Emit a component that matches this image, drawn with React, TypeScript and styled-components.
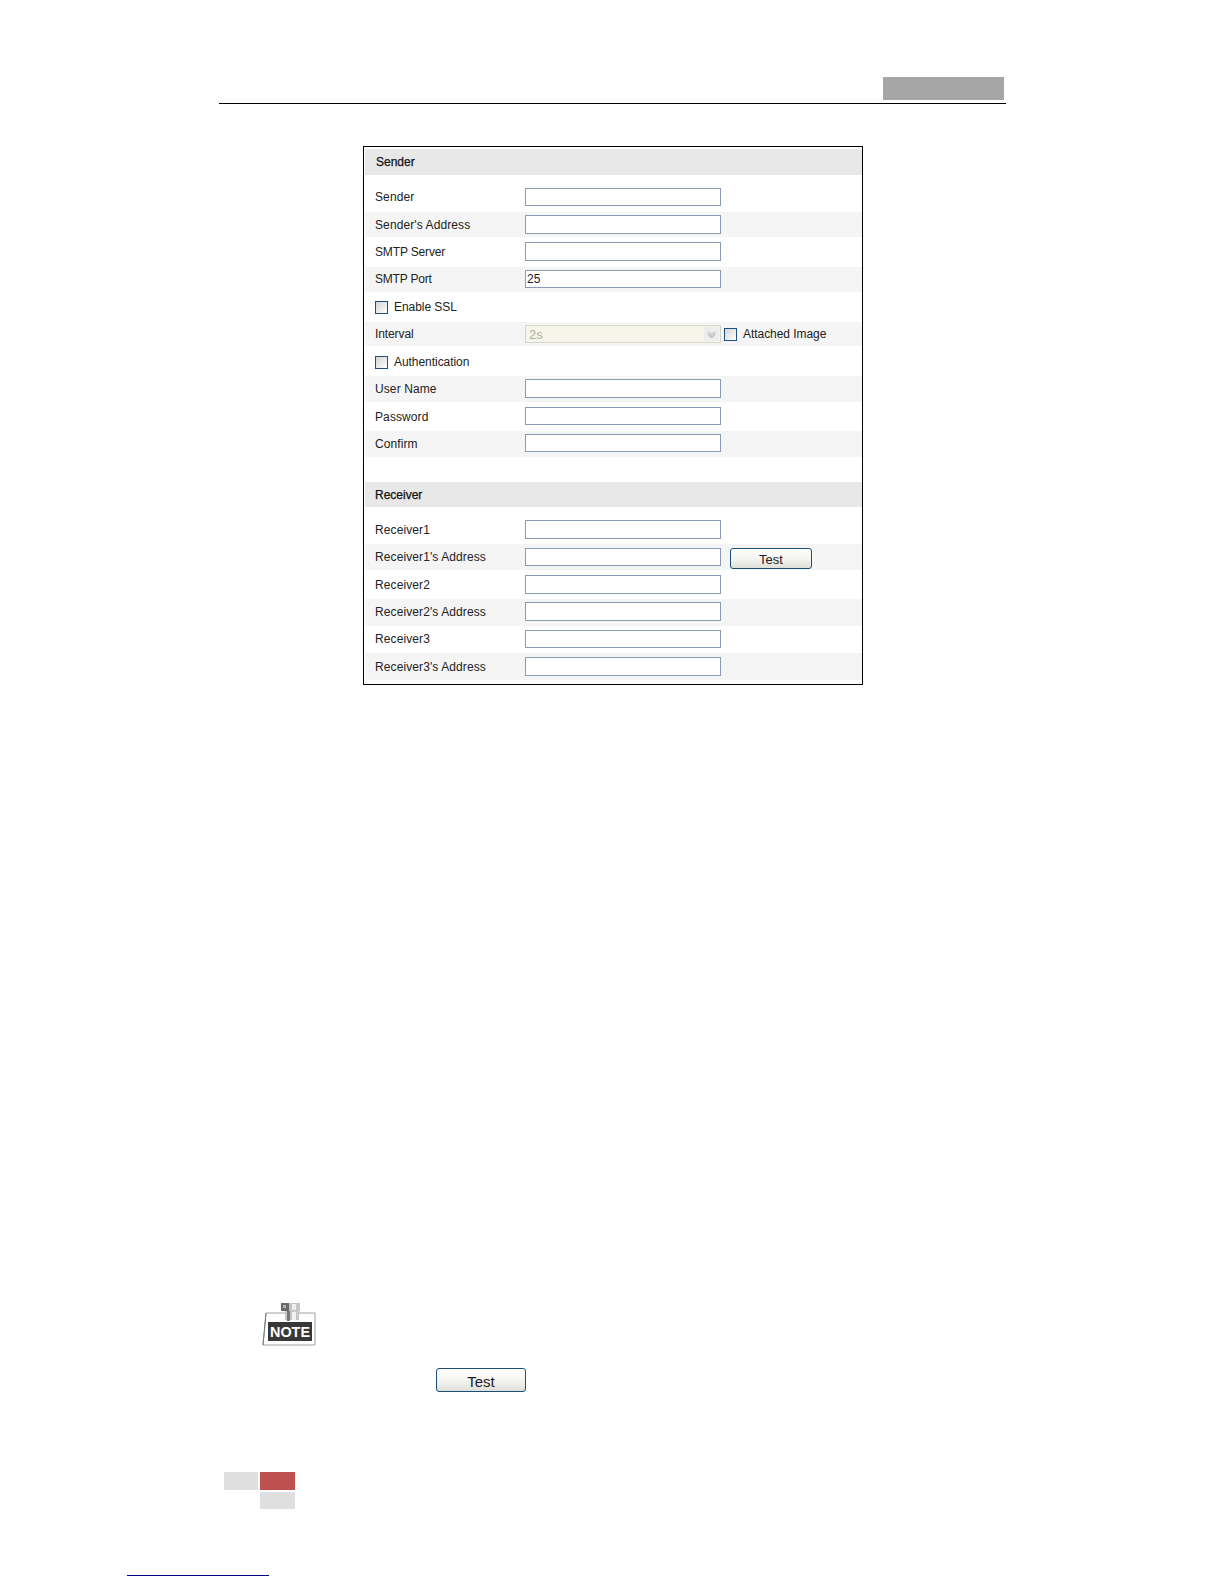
import React from "react";
import styled, { createGlobalStyle } from "styled-components";

const Global = createGlobalStyle`
  html, body { margin: 0; padding: 0; background: #fff; }
  * { box-sizing: border-box; }
`;

const Page = styled.div`
  width: 1224px;
  height: 1584px;
  overflow: hidden;
  display: flex;
  flex-direction: column;
  font-family: "Liberation Sans", Arial, sans-serif;
  font-size: 12px;
  color: #222;
`;

const TopBar = styled.header`
  margin-left: 219px;
  width: 787px;
  height: 104px;
  padding: 77px 2px 3px 0;
  display: flex;
  justify-content: flex-end;
  border-bottom: 1px solid #000;
`;

const TitleBlock = styled.div`
  width: 121px;
  background: #a6a6a6;
`;

const Panel = styled.section`
  margin: 42px 0 0 363px;
  width: 500px;
  height: 539px;
  padding: 2px 0 0 1px;
  border: 1px solid #000;
  background: #fff;
`;

const Band = styled.h2<{ $inset?: number; $height?: number }>`
  margin: 0;
  height: ${(p) => p.$height ?? 26}px;
  padding-left: ${(p) => p.$inset ?? 11}px;
  display: flex;
  align-items: center;
  background: #e8e8e8;
  font-size: 12px;
  font-weight: 400;
  color: #111;
  -webkit-text-stroke: 0.25px #111;
`;

const Row = styled.div<{ $striped?: boolean; $height: number; $nudge?: number }>`
  height: ${(p) => p.$height}px;
  padding: ${(p) => p.$nudge ?? 0}px 0 0 10px;
  display: grid;
  grid-template-columns: 150px 196px auto;
  align-items: center;
  background: ${(p) => (p.$striped ? "#f5f5f5" : "#fff")};
`;

const Spacer = styled.div<{ $height: number }>`
  height: ${(p) => p.$height}px;
`;

const Label = styled.label<{ $shift?: number; $track?: number }>`
  white-space: nowrap;
  letter-spacing: ${(p) => p.$track ?? 0.1}px;
  transform: translateY(${(p) => p.$shift ?? 0}px);
`;

const TextField = styled.input<{ $top: number; $height?: number }>`
  align-self: start;
  width: 196px;
  height: ${(p) => p.$height ?? 18}px;
  margin: ${(p) => p.$top}px 0 0;
  padding: 0 1px;
  border: 1px solid #8a9bb8;
  border-radius: 0;
  background: #fff;
  font: 12px "Liberation Sans", Arial, sans-serif;
  color: #222;
  outline: none;
`;

const DisabledSelect = styled.div`
  width: 196px;
  height: 18px;
  padding: 0 1px 0 3px;
  display: flex;
  align-items: center;
  justify-content: space-between;
  border: 1px solid #d6d6c6;
  background: #f5f5ea;
  color: #b0b0a4;
  font-size: 13px;
`;

const SelectArrow = styled.span`
  width: 15px;
  height: 14px;
  display: flex;
  align-items: center;
  justify-content: center;
  background: #ececec;
`;

const CheckLine = styled.div`
  display: flex;
  align-items: center;
  gap: 6px;
  white-space: nowrap;
  letter-spacing: -0.05px;
`;

const CheckBox = styled.span`
  flex: none;
  width: 13px;
  height: 13px;
  border: 1px solid #1c5180;
  background: linear-gradient(135deg, #d4d4d4 0%, #f2f2f2 70%, #fff 100%);
`;

const Extras = styled.div`
  margin-left: 3px;
`;

const TestButton = styled.button<{ $wide?: boolean }>`
  width: ${(p) => (p.$wide ? 90 : 82)}px;
  height: ${(p) => (p.$wide ? 24 : 21)}px;
  margin: ${(p) => (p.$wide ? "0" : "2px 0 0 9px")};
  display: block;
  padding: 3px 0 0;
  border: 1px solid #1c4f78;
  border-radius: 3px;
  background: linear-gradient(#ffffff, #f3f3f0 55%, #dfdfd9);
  font: ${(p) => (p.$wide ? 15 : 13)}px "Liberation Sans", Arial, sans-serif;
  color: #222;
`;

const NoteBlock = styled.div`
  margin: 617px 0 0 261px;
  width: 55px;
  height: 46px;
`;

const NoteSvg = styled.svg`
  display: block;
`;

const NoteWord = styled.text`
  font-family: "Liberation Sans", Arial, sans-serif;
  font-size: 15.5px;
  font-weight: 700;
  fill: #fff;
`;

const InlineAction = styled.div`
  margin: 20px 0 0 436px;
`;

const PageMark = styled.div`
  margin: 80px 0 0 224px;
  display: grid;
  grid-template-columns: 34px 35px;
  grid-template-rows: 18px 17px;
  gap: 2px;
`;

const MarkCell = styled.div<{ $red?: boolean; $column: number }>`
  grid-column: ${(p) => p.$column};
  background: ${(p) => (p.$red ? "#bf5050" : "#dfdfdf")};
`;

const FootnoteRule = styled.div`
  margin: 66px 0 0 127px;
  width: 142px;
  height: 1px;
  background: #00008b;
`;

const Chevron = () => (
  <svg width="9" height="7" viewBox="0 0 9 7" fill="none" stroke="#c4c4c4" strokeWidth="1.6">
    <path d="M1 1l3.5 3 3.5-3M1 3.5l3.5 3 3.5-3" />
  </svg>
);

const NoteIcon = () => (
  <NoteSvg width="55" height="46" viewBox="0 0 55 46">
    <path d="M5 11H54V43H2Z" fill="#fff" stroke="#a0a0a0" strokeWidth="1" />
    <path d="M5 11L2 43" stroke="#777" strokeWidth="1" />
    <rect x="20" y="1" width="8" height="8" fill="#6a6a6a" />
    <rect x="22" y="3" width="3" height="3" fill="#b5b5b5" />
    <rect x="28" y="1" width="11" height="8" fill="#c4c4c4" />
    <rect x="31" y="2" width="4" height="6" fill="#eeeeee" />
    <rect x="24" y="9" width="14" height="9" fill="#c6c6c6" />
    <rect x="26" y="9" width="3" height="10" fill="#777" />
    <rect x="31" y="10" width="4" height="8" fill="#f2f2f2" />
    <rect x="7" y="20" width="44" height="19" fill="#383838" />
    <NoteWord x="29" y="35" textAnchor="middle" textLength="40" lengthAdjust="spacingAndGlyphs">NOTE</NoteWord>
  </NoteSvg>
);

type Field = {
  name: string;
  rowHeight: number;
  striped?: boolean;
  top: number;
  fieldHeight?: number;
  value?: string;
  shift?: number;
  track?: number;
};

const fields = (list: Field[]) =>
  list.map((f) => (
    <Row key={f.name} $height={f.rowHeight} $striped={f.striped}>
      <Label $shift={f.shift} $track={f.track}>{f.name}</Label>
      <TextField readOnly defaultValue={f.value ?? ""} $top={f.top} $height={f.fieldHeight} />
    </Row>
  ));

export default function App() {
  return (
    <Page>
      <Global />
      <TopBar>
        <TitleBlock />
      </TopBar>
      <Panel>
        <Band>Sender</Band>
        <Spacer $height={7} />
        {fields([
          { name: "Sender", rowHeight: 30, top: 6 },
          { name: "Sender's Address", rowHeight: 25, striped: true, top: 3, fieldHeight: 19 },
          { name: "SMTP Server", rowHeight: 30, top: 5, fieldHeight: 19, track: -0.15 },
          { name: "SMTP Port", rowHeight: 25, striped: true, top: 3, value: "25", shift: -1, track: -0.2 },
        ])}
        <Row $height={30}>
          <CheckLine>
            <CheckBox />
            Enable SSL
          </CheckLine>
        </Row>
        <Row $height={24} $striped>
          <Label $track={-0.1}>Interval</Label>
          <DisabledSelect>
            2s
            <SelectArrow>
              <Chevron />
            </SelectArrow>
          </DisabledSelect>
          <Extras>
            <CheckLine>
              <CheckBox />
              Attached Image
            </CheckLine>
          </Extras>
        </Row>
        <Row $height={30} $nudge={2}>
          <CheckLine>
            <CheckBox />
            Authentication
          </CheckLine>
        </Row>
        {fields([
          { name: "User Name", rowHeight: 26, striped: true, top: 3, fieldHeight: 19 },
          { name: "Password", rowHeight: 29, top: 5 },
          { name: "Confirm", rowHeight: 26, striped: true, top: 3 },
        ])}
        <Spacer $height={25} />
        <Band $inset={10} $height={25}>Receiver</Band>
        <Spacer $height={7} />
        {fields([{ name: "Receiver1", rowHeight: 30, top: 6, fieldHeight: 19, shift: 1 }])}
        <Row $height={26} $striped>
          <Label>Receiver1's Address</Label>
          <TextField readOnly $top={4} />
          <TestButton type="button">Test</TestButton>
        </Row>
        {fields([
          { name: "Receiver2", rowHeight: 29, top: 5, fieldHeight: 19 },
          { name: "Receiver2's Address", rowHeight: 27, striped: true, top: 3, fieldHeight: 19, shift: -1 },
          { name: "Receiver3", rowHeight: 27, top: 4, shift: -1 },
          { name: "Receiver3's Address", rowHeight: 27, striped: true, top: 4, fieldHeight: 19 },
        ])}
      </Panel>
      <NoteBlock>
        <NoteIcon />
      </NoteBlock>
      <InlineAction>
        <TestButton type="button" $wide>Test</TestButton>
      </InlineAction>
      <PageMark>
        <MarkCell $column={1} />
        <MarkCell $column={2} $red />
        <MarkCell $column={2} />
      </PageMark>
      <FootnoteRule />
    </Page>
  );
}
